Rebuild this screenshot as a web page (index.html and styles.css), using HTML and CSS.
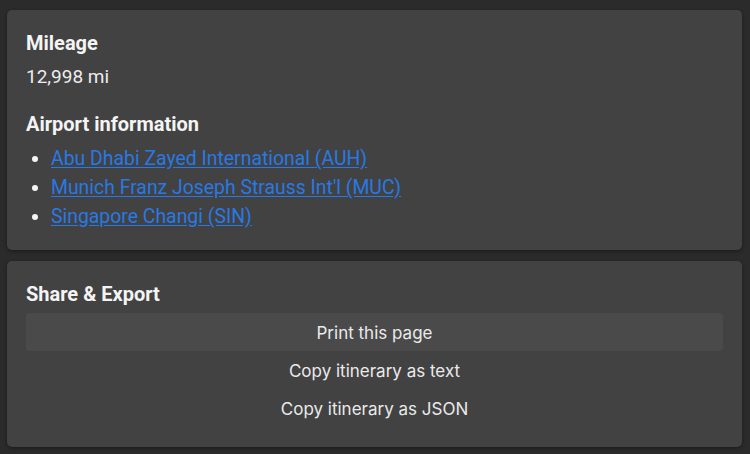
FILE: index.html
```html
<!DOCTYPE html>
<html lang="en">
<head>
<meta charset="utf-8">
<title>Trip details</title>
<link rel="stylesheet" href="styles.css">
</head>
<body>
<main class="page">
  <section class="card info">
    <h3 class="card-title">Mileage</h3>
    <p class="value">12,998 mi</p>
    <h3 class="card-title second">Airport information</h3>
    <ul class="airports">
      <li><a href="#">Abu Dhabi Zayed International (AUH)</a></li>
      <li><a href="#">Munich Franz Joseph Strauss Int'l (MUC)</a></li>
      <li><a href="#">Singapore Changi (SIN)</a></li>
    </ul>
  </section>
  <section class="card share">
    <h3 class="card-title">Share &amp; Export</h3>
    <div class="actions">
      <button class="action active" type="button">Print this page</button>
      <button class="action" type="button">Copy itinerary as text</button>
      <button class="action" type="button">Copy itinerary as JSON</button>
    </div>
  </section>
</main>
</body>
</html>
```

FILE: styles.css
```css
html, body {
  margin: 0;
  padding: 0;
  background: #2b2b2b;
  height: 100%;
  overflow: hidden;
}

.page {
  display: flex;
  flex-direction: column;
  gap: 11px;
  padding: 10px 8px 0 7px;
  font-family: Roboto, "Liberation Sans", sans-serif;
}

.card {
  background: #424242;
  border-radius: 5px;
  box-shadow: 0 1px 3px rgba(0, 0, 0, 0.25), 0 2px 4px rgba(0, 0, 0, 0.12);
  color: #ececec;
}

.info {
  padding: 21px 19px 0 19px;
  height: 240px;
  box-sizing: border-box;
}

.card-title {
  margin: 0;
  font-size: 20px;
  line-height: 24px;
  font-weight: 700;
  color: #f4f4f4;
}

.card-title.second {
  margin-top: 23px;
}

.value {
  margin: 10px 0 0;
  font-size: 19px;
  line-height: 24px;
  color: #ececec;
}

.airports {
  margin: 8px 0 0;
  padding: 0 0 0 25px;
  font-size: 19.4px;
  line-height: 29px;
  color: #f4f4f4;
}

.airports a {
  color: #2879e4;
  text-decoration: underline;
  text-underline-offset: 2px;
}

.share {
  padding: 21px 19px 0 19px;
  height: 186px;
  box-sizing: border-box;
}

.actions {
  display: flex;
  flex-direction: column;
  margin-top: 7px;
}

.action {
  height: 38px;
  border: 0;
  border-radius: 4px;
  background: transparent;
  color: #eaeaea;
  font-family: Inter, "Open Sans", sans-serif;
  font-size: 17px;
  font-weight: 400;
  padding: 2px 0 0;
  cursor: pointer;
}

.action.active {
  background: #4a4a4a;
}
```
